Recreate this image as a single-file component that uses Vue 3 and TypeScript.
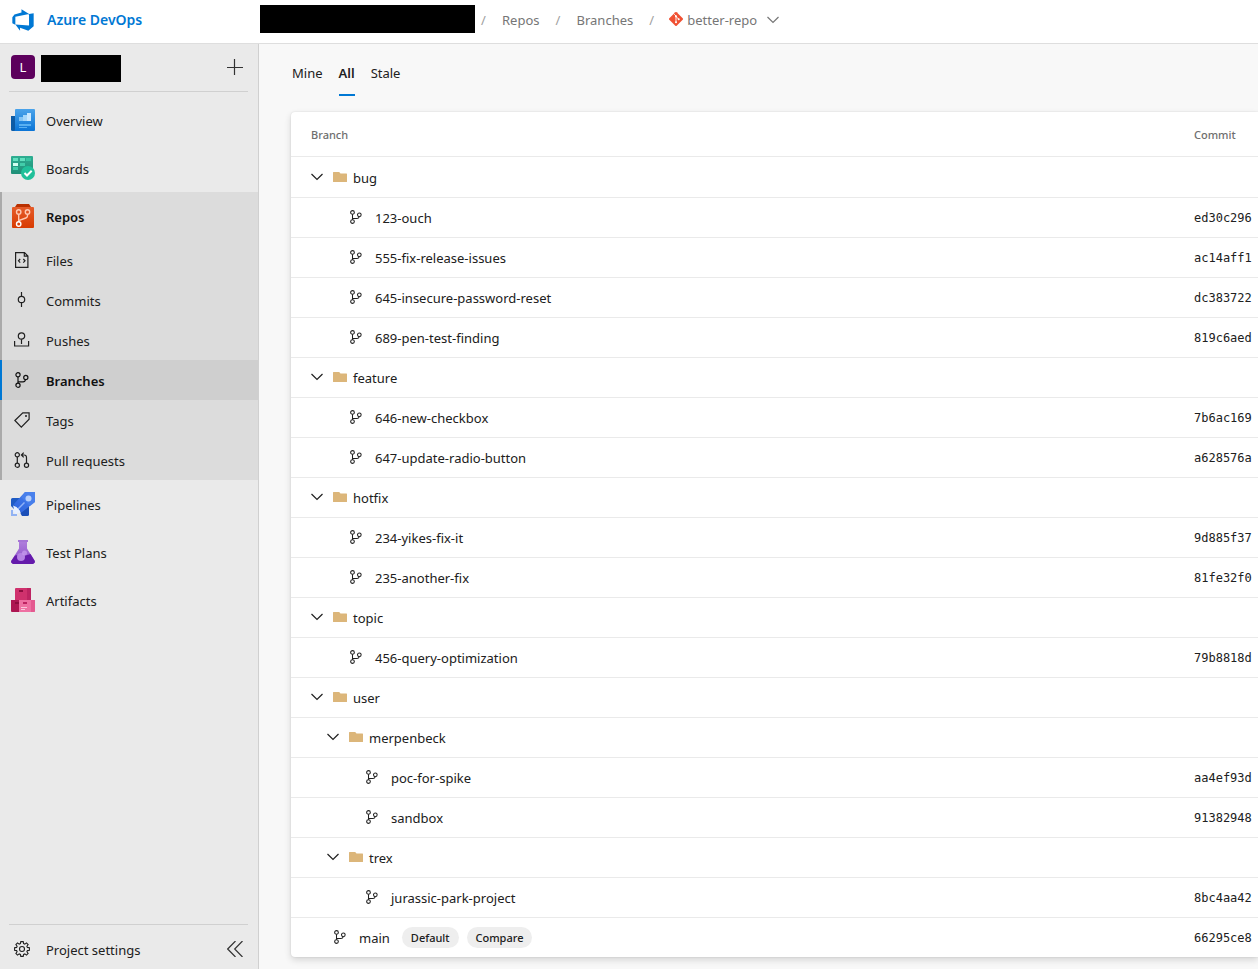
<script setup lang="ts">
import { computed, ref } from 'vue'

interface NavItem {
  label: string
  icon: string
}

interface BranchNode {
  name: string
  depth: number
  path: string
  commit?: string
  folder?: boolean
  isDefault?: boolean
}

const topItems: NavItem[] = [
  { label: 'Overview', icon: 'overview' },
  { label: 'Boards', icon: 'boards' },
]
const repoItems: NavItem[] = [
  { label: 'Files', icon: 'files' },
  { label: 'Commits', icon: 'commits' },
  { label: 'Pushes', icon: 'pushes' },
  { label: 'Branches', icon: 'branches' },
  { label: 'Tags', icon: 'tags' },
  { label: 'Pull requests', icon: 'pulls' },
]
const lowerItems: NavItem[] = [
  { label: 'Pipelines', icon: 'pipelines' },
  { label: 'Test Plans', icon: 'tests' },
  { label: 'Artifacts', icon: 'artifacts' },
]

const tabs = ['Mine', 'All', 'Stale']
const activeTab = ref('All')

const nodes: BranchNode[] = [
  { name: 'bug', depth: 0, path: 'bug', folder: true },
  { name: '123-ouch', depth: 1, path: 'bug/123', commit: 'ed30c296' },
  { name: '555-fix-release-issues', depth: 1, path: 'bug/555', commit: 'ac14aff1' },
  { name: '645-insecure-password-reset', depth: 1, path: 'bug/645', commit: 'dc383722' },
  { name: '689-pen-test-finding', depth: 1, path: 'bug/689', commit: '819c6aed' },
  { name: 'feature', depth: 0, path: 'feature', folder: true },
  { name: '646-new-checkbox', depth: 1, path: 'feature/646', commit: '7b6ac169' },
  { name: '647-update-radio-button', depth: 1, path: 'feature/647', commit: 'a628576a' },
  { name: 'hotfix', depth: 0, path: 'hotfix', folder: true },
  { name: '234-yikes-fix-it', depth: 1, path: 'hotfix/234', commit: '9d885f37' },
  { name: '235-another-fix', depth: 1, path: 'hotfix/235', commit: '81fe32f0' },
  { name: 'topic', depth: 0, path: 'topic', folder: true },
  { name: '456-query-optimization', depth: 1, path: 'topic/456', commit: '79b8818d' },
  { name: 'user', depth: 0, path: 'user', folder: true },
  { name: 'merpenbeck', depth: 1, path: 'user/merpenbeck', folder: true },
  { name: 'poc-for-spike', depth: 2, path: 'user/merpenbeck/poc', commit: 'aa4ef93d' },
  { name: 'sandbox', depth: 2, path: 'user/merpenbeck/sandbox', commit: '91382948' },
  { name: 'trex', depth: 1, path: 'user/trex', folder: true },
  { name: 'jurassic-park-project', depth: 2, path: 'user/trex/jurassic', commit: '8bc4aa42' },
  { name: 'main', depth: 0, path: 'main', commit: '66295ce8', isDefault: true },
]

const collapsed = ref<string[]>([])
const visible = computed(() =>
  nodes.filter((n) => !collapsed.value.some((c) => n.path.startsWith(c + '/'))),
)
function toggle(path: string) {
  collapsed.value = collapsed.value.includes(path)
    ? collapsed.value.filter((c) => c !== path)
    : [...collapsed.value, path]
}
</script>

<template>
  <div class="page">
    <svg class="defs" aria-hidden="true">
      <defs>
        <linearGradient id="gBlue" x1="0" y1="0" x2="0" y2="1"><stop offset="0" stop-color="#4aa3ea" /><stop offset="1" stop-color="#0a74d6" /></linearGradient>
        <linearGradient id="gTeal" x1="0" y1="0" x2="0" y2="1"><stop offset="0" stop-color="#2fae92" /><stop offset="1" stop-color="#1f8f78" /></linearGradient>
        <linearGradient id="gOrange" x1="0" y1="0" x2="0" y2="1"><stop offset="0" stop-color="#e55c2a" /><stop offset="1" stop-color="#d83b01" /></linearGradient>
        <linearGradient id="gRocket" x1="1" y1="0" x2="0" y2="1"><stop offset="0" stop-color="#4a82ee" /><stop offset="1" stop-color="#2b62dc" /></linearGradient>
        <linearGradient id="gFlask" x1="0" y1="0" x2="0" y2="1"><stop offset="0" stop-color="#b07fdc" /><stop offset="1" stop-color="#8a4fc8" /></linearGradient>
      </defs>
      <symbol id="i-branch" viewBox="0 0 16 16">
        <g fill="none" stroke="currentColor" stroke-width="1.2">
          <circle cx="4" cy="2.8" r="2.1" /><circle cx="4" cy="13.200" r="2.1" /><circle cx="11.800" cy="5.500" r="2.1" />
          <path d="M4 4.900v6.200M4.100 9.800h5c1.600 0 2.200-.8 2.500-2.200" />
        </g>
      </symbol>
      <symbol id="i-overview" viewBox="0 0 24 24">
        <path d="M0 8h5v15H1.500A1.500 1.500 0 0 1 0 21.500z" fill="#0d5ba5" />
        <path d="M4 2a1 1 0 0 1 1-1h18a1 1 0 0 1 1 1v20a1 1 0 0 1-1 1H2.500A1.500 1.500 0 0 0 4 21.500z" fill="url(#gBlue)" />
        <path d="M8 9h4v4H8z" fill="#83c5f5" /><path d="M12 7h4v6h-4z" fill="#a4d6fa" /><path d="M16 5h4v8h-4z" fill="#c9e8ff" />
        <path d="M8 16h12v2H8zM8 19h8v1H8z" fill="#58b0f2" />
      </symbol>
      <symbol id="i-boards" viewBox="0 0 24 24">
        <path d="M1 0h20a1 1 0 0 1 1 1v17H1a1 1 0 0 1-1-1V1a1 1 0 0 1 1-1z" fill="url(#gTeal)" />
        <path d="M2 2h5v3H2zM9 2h5v3H9z" fill="#62e0bf" /><path d="M15 2h5v3h-5z" fill="#38c5a2" />
        <path d="M2 7h5v3H2z" fill="#d0fff0" /><path d="M9 7h5v3H9zM2 11h5v3H2z" fill="#42cdaa" />
        <circle cx="17" cy="17" r="7" fill="#20c09a" /><path d="m13.500 17 2.500 2.500 4.700-4.700" fill="none" stroke="#fff" stroke-width="2" />
      </symbol>
      <symbol id="i-repos" viewBox="0 0 24 24">
        <path d="M6 0h12l2 3v3H4V3z" fill="#b93000" />
        <path d="M2 3h20a1 1 0 0 1 1 1v19a1 1 0 0 1-1 1H2a1 1 0 0 1-1-1V4a1 1 0 0 1 1-1z" fill="url(#gOrange)" />
        <g fill="none" stroke="#ffc9b2" stroke-width="1.400">
          <circle cx="7.700" cy="8" r="2.200" /><circle cx="16.500" cy="8" r="2.200" /><path d="M7.700 10.200V18M16.500 10.200v1.600c0 1.200-.5 1.800-1.600 2.200L9 16.200l-1.300 1.800" /><circle cx="7.700" cy="20" r="2.200" stroke="#fff" />
        </g>
      </symbol>
      <symbol id="i-pipelines" viewBox="0 0 24 24">
        <path d="M0 7.500A1.500 1.500 0 0 1 1.500 6H10v8L4 18l-4-4z" fill="#1f5bc4" />
        <path d="M18 14v8.500a1.500 1.500 0 0 1-1.500 1.500H11l-3-5z" fill="#1b4fb8" />
        <path d="M14 0h10v10L10.500 20.500l-8-8z" fill="url(#gRocket)" /><path d="M14 0h10v10l-5 4-9-9z" fill="#4b82ed" opacity=".65" />
        <circle cx="17.500" cy="6.500" r="3" fill="#b8d0fb" /><path d="m7 17 6.500-6.500" stroke="#8fb2f7" stroke-width="1.500" />
        <path d="m2 13.500 3.500 1.500L9 19l1 2.500-3.500-1-1 2.500-5-5 2.500-1z" fill="#e6efff" /><path d="M0 18h2v4h4v2H0z" fill="#91b2f3" />
      </symbol>
      <symbol id="i-tests" viewBox="0 0 24 24">
        <path d="M8 1h8v7.500l7.500 12A2.300 2.300 0 0 1 21.500 24h-19A2.300 2.300 0 0 1 .5 20.500l7.500-12z" fill="url(#gFlask)" />
        <path d="M4 15.500c5-1 8 1.500 15.500-1.500l4 6.500A2.300 2.300 0 0 1 21.500 24h-19A2.300 2.300 0 0 1 .5 20.500z" fill="#651bab" />
        <path d="M7 0h10v2H7z" fill="#a676d6" /><circle cx="10" cy="17" r="4" fill="#b583e4" /><circle cx="13.500" cy="13" r="2.500" fill="#c79bee" opacity=".75" />
      </symbol>
      <symbol id="i-artifacts" viewBox="0 0 24 24">
        <path d="M5 0h14a1 1 0 0 1 1 1v11H4V1a1 1 0 0 1 1-1z" fill="#cf316d" /><path d="M16 0h3a1 1 0 0 1 1 1v11h-4z" fill="#bd2462" />
        <path d="M0 12h8v12H1a1 1 0 0 1-1-1z" fill="#ad1752" /><path d="M8 12h16v11a1 1 0 0 1-1 1H8z" fill="#ee70a2" /><path d="M20 12h4v11a1 1 0 0 1-1 1h-3z" fill="#e45a90" />
        <path d="M8 2h4v2H8zM4 14h4v2H4z" fill="#8d0d3f" /><path d="M12 14h4v2h-4z" fill="#bd2462" /><path d="M10 19h6v1h-6zM10 21h4v1h-4z" fill="#fbc4da" />
      </symbol>
      <symbol id="i-files" viewBox="0 0 16 16">
        <path d="M1.600.6h8.900l3.400 3.400v11.400H1.600zM10.300.8v3.400h3.500M6.200 7 4.500 8.800l1.700 1.800M9.300 7l1.700 1.800-1.700 1.800" fill="none" stroke="currentColor" stroke-width="1.200" />
      </symbol>
      <symbol id="i-commits" viewBox="0 0 16 16">
        <path d="M7.500 0v4.200M7.500 10.800V15" stroke="currentColor" stroke-width="1.200" /><circle cx="7.500" cy="7.500" r="3.200" fill="none" stroke="currentColor" stroke-width="1.200" />
      </symbol>
      <symbol id="i-pushes" viewBox="0 0 16 16">
        <path d="M.6 9v5h14V9M7.500 7.300V12" fill="none" stroke="currentColor" stroke-width="1.200" /><circle cx="7.500" cy="4" r="3.200" fill="none" stroke="currentColor" stroke-width="1.200" />
      </symbol>
      <symbol id="i-branches" viewBox="0 0 16 16">
        <use href="#i-branch" />
      </symbol>
      <symbol id="i-tags" viewBox="0 0 16 16">
        <path d="M.9 8.500 8.800.9h6.300v6.300l-7.800 7.900z" fill="none" stroke="currentColor" stroke-width="1.200" /><circle cx="12" cy="4" r="1" fill="currentColor" />
      </symbol>
      <symbol id="i-pulls" viewBox="0 0 16 16">
        <g fill="none" stroke="currentColor" stroke-width="1.200">
          <circle cx="3.300" cy="2.800" r="2.100" /><circle cx="3.300" cy="13.200" r="2.100" /><circle cx="12.500" cy="13.200" r="2.100" />
          <path d="M3.300 4.900v6.200M12.500 11.100V5.500c0-1.600-.9-2.500-2.300-2.500H7.500M9.700.7 7.400 3l2.300 2.300" />
        </g>
      </symbol>
    </svg>

    <header class="topbar">
      <a class="brand" href="#">
        <svg class="logo" viewBox="0 0 18 18" aria-hidden="true"><path fill="#0078d4" d="M17 4v9.740l-4 3.280-6.200-2.260V17l-3.510-4.590 10.230.8V4.440zm-3.410.49L7.850 1v2.290L2.580 4.840 1 6.870v4.610l2.260 1V6.570z" /></svg>
        <span>Azure DevOps</span>
      </a>
      <nav class="crumbs" aria-label="Breadcrumb">
        <span class="redacted wide"></span>
        <span class="slash first">/</span>
        <a href="#">Repos</a>
        <span class="slash">/</span>
        <a href="#">Branches</a>
        <span class="slash">/</span>
        <button class="repo-picker" type="button">
          <svg class="git" viewBox="0 0 14 14" aria-hidden="true">
            <path d="M6.300.3a1 1 0 0 1 1.400 0l6 6a1 1 0 0 1 0 1.400l-6 6a1 1 0 0 1-1.400 0l-6-6a1 1 0 0 1 0-1.400z" fill="#f05133" />
            <path d="M5.200 2.200 7 4v6.300M7 4.500l2.700 2.700" fill="none" stroke="#fff" stroke-width=".9" /><circle cx="7" cy="4.200" r="1" fill="#fff" /><circle cx="7" cy="10.200" r="1" fill="#fff" /><circle cx="9.700" cy="7.200" r="1" fill="#fff" />
          </svg>
          <span>better-repo</span>
          <svg class="chevron" viewBox="0 0 12 8" aria-hidden="true"><path d="m.5 1 5.500 5.500L11.500 1" /></svg>
        </button>
      </nav>
    </header>

    <div class="body">
      <aside class="sidebar">
        <div class="project">
          <span class="avatar">L</span>
          <span class="redacted small"></span>
          <button class="icon-btn" type="button" aria-label="Add">
            <svg width="16" height="16" viewBox="0 0 16 16"><path d="M7.500 0v16M0 8.500h16" /></svg>
          </button>
        </div>
        <nav class="nav" aria-label="Project">
          <a v-for="i in topItems" :key="i.label" class="hub" href="#">
            <svg class="hub-icon"><use :href="'#i-' + i.icon" /></svg>{{ i.label }}
          </a>
          <div class="group">
            <a class="hub strong" href="#"><svg class="hub-icon"><use href="#i-repos" /></svg>Repos</a>
            <a v-for="i in repoItems" :key="i.label" class="sub" :class="{ current: i.label === 'Branches' }" href="#">
              <span class="sub-icon"><svg><use :href="'#i-' + i.icon" /></svg></span>{{ i.label }}
            </a>
          </div>
          <a v-for="i in lowerItems" :key="i.label" class="hub" href="#">
            <svg class="hub-icon"><use :href="'#i-' + i.icon" /></svg>{{ i.label }}
          </a>
        </nav>
        <div class="settings">
          <a href="#">
            <span class="sub-icon">
              <svg viewBox="0 0 16 16"><g fill="none" stroke="currentColor" stroke-width="1.100"><path d="M6.800.6h2.400l.4 2 1.200.5 1.700-1.200 1.600 1.600-1.200 1.700.5 1.200 2 .4v2.400l-2 .4-.5 1.200 1.200 1.700-1.600 1.600-1.700-1.200-1.200.5-.4 2H6.800l-.4-2-1.200-.5-1.700 1.200-1.600-1.600 1.200-1.700-.5-1.200-2-.4V6.800l2-.4.5-1.200-1.200-1.700 1.600-1.600 1.700 1.200 1.200-.5z" /><circle cx="8" cy="8" r="2.500" /></g></svg>
            </span>Project settings
          </a>
          <button class="icon-btn" type="button" aria-label="Collapse navigation">
            <svg width="16" height="16" viewBox="0 0 16 16"><path d="M8.500 0 .700 8l7.800 8M15.500 0 7.700 8l7.800 8" /></svg>
          </button>
        </div>
      </aside>

      <main class="main">
        <div class="tabs" role="tablist">
          <button v-for="t in tabs" :key="t" type="button" role="tab" :aria-selected="t === activeTab" :class="{ active: t === activeTab }" @click="activeTab = t">{{ t }}</button>
        </div>
        <div class="card">
          <table>
            <thead>
              <tr><th scope="col">Branch</th><th scope="col" class="commit">Commit</th></tr>
            </thead>
            <tbody>
              <tr v-for="n in visible" :key="n.path">
                <td>
                  <div class="cell" :class="'depth-' + n.depth">
                    <template v-if="n.folder">
                      <button class="toggle" type="button" :aria-label="'Toggle ' + n.name" :aria-expanded="!collapsed.includes(n.path)" @click="toggle(n.path)">
                        <svg class="chevron" viewBox="0 0 12 8"><path d="m.5 1 5.500 5.500L11.500 1" /></svg>
                      </button>
                      <svg class="folder" viewBox="0 0 14 10" aria-hidden="true"><path d="M0 .5A.5.5 0 0 1 .5 0h5.700l1.300 1.500h6a.5.5 0 0 1 .5.500v7.500a.5.5 0 0 1-.5.500H.5a.5.5 0 0 1-.5-.5z" fill="#dcb67a" /></svg>
                      <span>{{ n.name }}</span>
                    </template>
                    <template v-else>
                      <svg class="branch" aria-hidden="true"><use href="#i-branch" /></svg>
                      <a href="#">{{ n.name }}</a>
                      <template v-if="n.isDefault">
                        <span class="pill">Default</span>
                        <button class="pill" type="button">Compare</button>
                      </template>
                    </template>
                  </div>
                </td>
                <td class="commit"><a v-if="n.commit" href="#">{{ n.commit }}</a></td>
              </tr>
            </tbody>
          </table>
        </div>
      </main>
    </div>
  </div>
</template>

<style>
body {
  margin: 0;
}
</style>

<style scoped>
.page {
  min-height: 100vh;
  display: flex;
  flex-direction: column;
  font: 13px/20px "Noto Sans", "Open Sans", sans-serif;
  color: #202020;
  background: #f8f8f8;
  overflow: hidden;
}
.page * {
  box-sizing: border-box;
}
.defs {
  position: absolute;
  width: 0;
  height: 0;
}
a {
  color: inherit;
  text-decoration: none;
}
button {
  font: inherit;
  color: inherit;
  background: none;
  border: 0;
  padding: 0;
  cursor: pointer;
}
.topbar {
  display: flex;
  align-items: flex-start;
  height: 44px;
  background: #fff;
  border-bottom: 1px solid #dedede;
}
.brand {
  display: flex;
  align-items: center;
  gap: 12px;
  width: 260px;
  height: 40px;
  padding-left: 11px;
  color: #0078d4;
  font-size: 14px;
  font-weight: 600;
}
.logo {
  width: 24px;
  height: 24px;
}
.crumbs {
  display: flex;
  align-items: center;
  gap: 16px;
  height: 40px;
  color: #767676;
}
.redacted {
  background: #000;
}
.wide {
  width: 215px;
  height: 28px;
  margin-bottom: 2px;
}
.small {
  width: 80px;
  height: 27px;
  margin-top: 2px;
}
.slash {
  width: 5px;
  color: #a0a0a0;
}
.first {
  margin-left: -10px;
}
.repo-picker {
  display: flex;
  align-items: center;
  margin-left: -1px;
}
.git {
  width: 14px;
  height: 14px;
  margin: 0 4px 2px 0;
}
.chevron {
  display: block;
  width: 12px;
  height: 8px;
  fill: none;
  stroke: currentColor;
  stroke-width: 1.2;
}
.repo-picker .chevron {
  margin-left: 10px;
}
.body {
  display: flex;
  flex: 1;
}
.sidebar {
  display: flex;
  flex-direction: column;
  flex: none;
  width: 259px;
  background: #eaeaea;
  border-right: 1px solid #d0d0d0;
}
.project {
  display: flex;
  align-items: center;
  gap: 6px;
  height: 48px;
  margin: 0 10px 4px 9px;
  padding: 0 5px 1px 2px;
  border-bottom: 1px solid #d0d0d0;
}
.avatar {
  width: 24px;
  height: 24px;
  border-radius: 4px;
  background: #5c005c;
  color: #fff;
  line-height: 24px;
  text-align: center;
}
.icon-btn {
  margin-left: auto;
}
.icon-btn svg {
  display: block;
  fill: none;
  stroke: #333;
  stroke-width: 1.2;
}
.hub,
.sub {
  display: flex;
  align-items: center;
  gap: 11px;
  height: 48px;
  padding: 2px 0 0 11px;
}
.hub-icon {
  width: 24px;
  height: 24px;
  margin-top: -2px;
}
.group {
  background: #dcdcdc;
  box-shadow: inset 2px 0 #aaa;
}
.sub {
  height: 40px;
}
.sub-icon {
  display: flex;
  width: 24px;
  padding-left: 3px;
  margin-top: -2px;
}
.sub-icon svg {
  width: 16px;
  height: 16px;
}
.strong,
.current {
  font-weight: 600;
  color: #111;
}
.current {
  background: #cfcfcf;
  box-shadow: inset 2px 0 #0078d4;
}
.settings {
  display: flex;
  align-items: center;
  height: 45px;
  margin: auto 10px 0 9px;
  padding: 6px 5px 0 2px;
  border-top: 1px solid #d0d0d0;
}
.settings a {
  display: flex;
  align-items: center;
  gap: 11px;
}
.settings .icon-btn {
  margin-bottom: 2px;
}
.main {
  flex: 1;
  min-width: 0;
  padding: 16px 0 12px 32px;
}
.tabs {
  display: flex;
  gap: 16px;
  height: 36px;
  margin: 0 0 16px 1px;
}
.tabs button {
  padding: 3px 0 11px;
  border-bottom: 2px solid transparent;
}
.tabs .active {
  font-weight: 600;
  border-color: #0078d4;
}
.card {
  background: #fff;
  border-radius: 4px 0 0 4px;
  box-shadow: 0 3px 7px rgba(0, 0, 0, 0.14), 0 0 2px rgba(0, 0, 0, 0.12);
}
table {
  width: 100%;
  border-spacing: 0;
}
th,
td {
  padding: 0;
  height: 40px;
  text-align: left;
  border-bottom: 1px solid #eaeaea;
}
th {
  height: 45px;
  padding: 2px 0 0 20px;
  color: #6e6e6e;
  font-size: 11px;
  font-weight: 500;
}
tbody tr:first-child td {
  height: 41px;
  padding-top: 1px;
}
tbody tr:last-child td {
  height: 39px;
  border-bottom: 0;
}
.commit {
  width: 64px;
}
th.commit {
  padding-left: 0;
}
td.commit {
  font: 12px/20px "DejaVu Sans Mono", monospace;
}
.cell {
  display: flex;
  align-items: center;
  padding-left: 20px;
}
.depth-1 {
  padding-left: 36px;
}
.depth-2 {
  padding-left: 52px;
}
.toggle {
  margin-bottom: 2px;
}
.folder {
  width: 14px;
  height: 10px;
  margin: 0 6px 2px 10px;
}
.branch {
  width: 14px;
  height: 14px;
  margin: 0 12px 2px 22px;
}
.pill {
  height: 21px;
  margin-left: 12px;
  padding: 0 9px;
  border-radius: 11px;
  background: #eee;
  font-size: 11px;
  font-weight: 500;
  line-height: 21px;
}
.pill + .pill {
  margin-left: 8px;
}
</style>
